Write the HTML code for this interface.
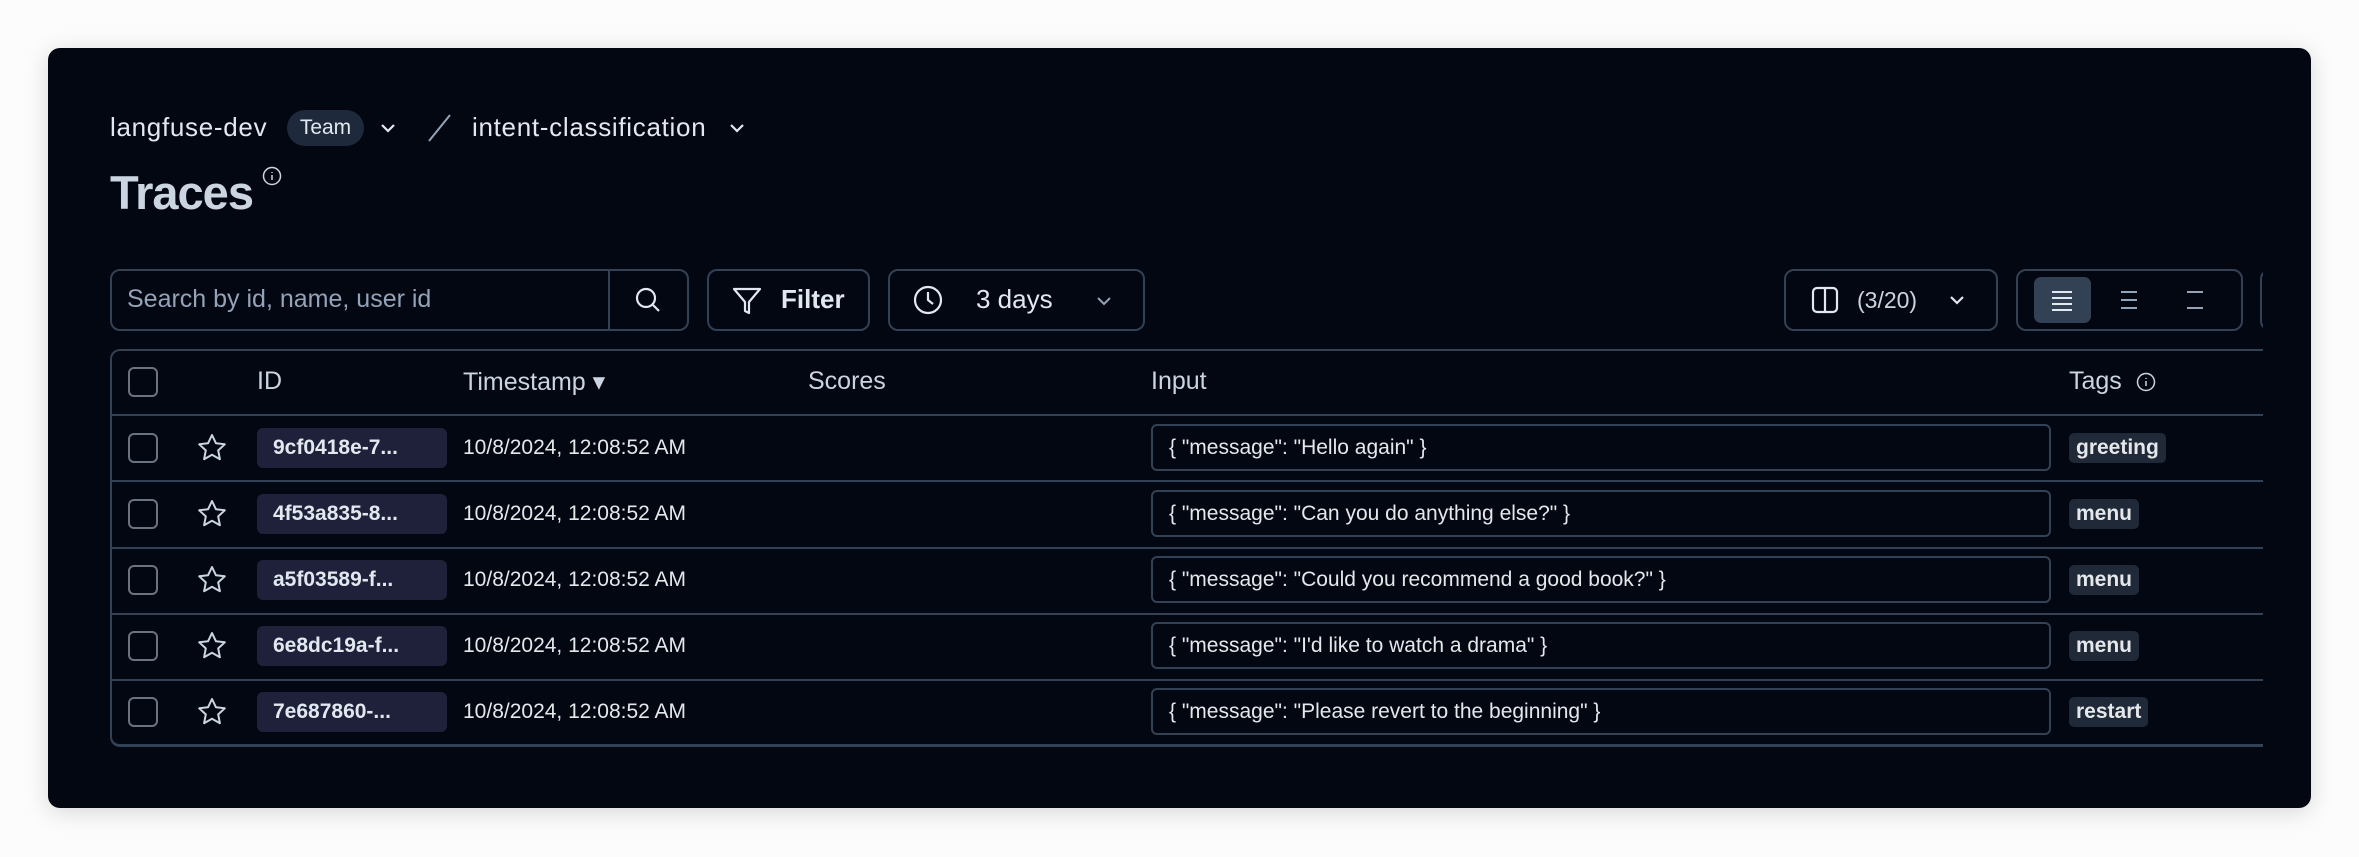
<!DOCTYPE html>
<html><head><meta charset="utf-8"><style>
*{box-sizing:border-box;margin:0;padding:0}
body{width:2359px;height:857px;background:#fcfcfc;font-family:"Liberation Sans",sans-serif;position:relative;overflow:hidden}
.card{position:absolute;left:48px;top:48px;width:2263px;height:760px;background:#030712;border-radius:12px;box-shadow:0 4px 24px rgba(0,0,0,.15);overflow:hidden}
.a{position:absolute}
.t{color:#e2e8f0;font-size:26px;white-space:nowrap;letter-spacing:0.7px}
.box{position:absolute;border:2px solid #334155;border-radius:10px}
.hd{color:#cbd5e1;font-size:25px;position:absolute;top:367px;white-space:nowrap}
.hl{position:absolute;left:110px;width:2153px;height:2px;background:#334155}
.cb{position:absolute;left:128px;width:30px;height:30px;border:2px solid #6b7280;border-radius:6px}
.id{position:absolute;left:257px;width:190px;height:40px;background:#1e2139;border-radius:6px;color:#e2e8f0;font-weight:bold;font-size:21px;line-height:40px;padding-left:16px}
.ts{position:absolute;left:463px;color:#e5e7eb;font-size:21px;line-height:40px}
.in{position:absolute;left:1151px;width:900px;height:47px;border:2px solid #334155;border-radius:6px;color:#e5e7eb;font-size:21px;line-height:43px;padding-left:16px}
.tag{position:absolute;left:2069px;height:30px;background:#1f2937;border-radius:5px;color:#e5e7eb;font-weight:bold;font-size:21px;line-height:30px;padding:0 7px}
svg{position:absolute}
</style></head><body>
<div class="card"></div>
<div class="a t" style="left:110px;top:112px">langfuse-dev</div>
<div class="a" style="left:287px;top:110px;width:77px;height:36px;background:#1e293b;border-radius:18px;color:#e2e8f0;font-size:21px;line-height:36px;text-align:center">Team</div>
<svg style="left:378px;top:118px" width="20" height="20" viewBox="0 0 20 20"><path d="M4 7l6 6 6-6" stroke="#e2e8f0" stroke-width="2.2" fill="none"/></svg>
<svg style="left:424px;top:112px" width="30" height="32"><path d="M26 3L5 29" stroke="#94a3b8" stroke-width="2"/></svg>
<div class="a t" style="left:472px;top:112px">intent-classification</div>
<svg style="left:727px;top:118px" width="20" height="20" viewBox="0 0 20 20"><path d="M4 7l6 6 6-6" stroke="#e2e8f0" stroke-width="2.2" fill="none"/></svg>
<div class="a" style="left:110px;top:165px;color:#cbd5e1;font-size:47px;font-weight:bold;letter-spacing:-1px">Traces</div>
<svg style="left:262px;top:166px" width="20" height="20"><circle cx="10" cy="10" r="8.5" stroke="#cbd5e1" stroke-width="1.5" fill="none"/><path d="M10 9v5M10 6v1" stroke="#cbd5e1" stroke-width="1.5"/></svg>

<div class="box" style="left:110px;top:269px;width:579px;height:62px"></div>
<div class="a" style="left:608px;top:270px;width:2px;height:60px;background:#334155"></div>
<div class="a" style="left:127px;top:285px;color:#94a3b8;font-size:25px">Search by id, name, user id</div>
<svg style="left:633px;top:285px" width="30" height="30"><circle cx="13" cy="13" r="9" stroke="#e2e8f0" stroke-width="2.2" fill="none"/><path d="M20 20l6 6" stroke="#e2e8f0" stroke-width="2.2"/></svg>
<div class="box" style="left:707px;top:269px;width:163px;height:62px"></div>
<svg style="left:731px;top:285px" width="32" height="32"><path d="M3 4h26L18 17v11l-4-2v-9z" stroke="#e2e8f0" stroke-width="2.2" fill="none" stroke-linejoin="round"/></svg>
<div class="a" style="left:781px;top:284px;color:#e2e8f0;font-size:26px;font-weight:bold">Filter</div>
<div class="box" style="left:888px;top:269px;width:257px;height:62px"></div>
<svg style="left:912px;top:284px" width="32" height="32"><circle cx="16" cy="16" r="13" stroke="#e2e8f0" stroke-width="2.2" fill="none"/><path d="M16 8v8l5 4" stroke="#e2e8f0" stroke-width="2.2" fill="none"/></svg>
<div class="a" style="left:976px;top:284px;color:#e2e8f0;font-size:26px">3 days</div>
<svg style="left:1094px;top:291px" width="20" height="20"><path d="M4 7l6 6 6-6" stroke="#94a3b8" stroke-width="2" fill="none"/></svg>

<div class="box" style="left:1784px;top:269px;width:214px;height:62px"></div>
<svg style="left:1811px;top:286px" width="28" height="28"><rect x="2" y="2" width="24" height="24" rx="4" stroke="#e2e8f0" stroke-width="2.2" fill="none"/><path d="M14 2v24" stroke="#e2e8f0" stroke-width="2.2"/></svg>
<div class="a" style="left:1857px;top:287px;color:#cbd5e1;font-size:23px">(3/20)</div>
<svg style="left:1947px;top:290px" width="20" height="20"><path d="M4 7l6 6 6-6" stroke="#e2e8f0" stroke-width="2.2" fill="none"/></svg>
<div class="box" style="left:2016px;top:269px;width:227px;height:62px"></div>
<div class="a" style="left:2034px;top:277px;width:57px;height:46px;background:#334155;border-radius:7px"></div>
<svg style="left:2050px;top:289px" width="24" height="22"><path d="M2 3h20M2 9h20M2 15h20M2 21h20" stroke="#e2e8f0" stroke-width="2"/></svg>
<svg style="left:2117px;top:289px" width="24" height="22"><path d="M4 3h16M4 11h16M4 19h16" stroke="#94a3b8" stroke-width="2"/></svg>
<svg style="left:2183px;top:289px" width="24" height="22"><path d="M4 3h16M4 19h16" stroke="#94a3b8" stroke-width="2"/></svg>
<div class="a" style="left:2260px;top:269px;width:3px;height:62px;overflow:hidden"><div style="width:30px;height:62px;border:2px solid #334155;border-radius:10px"></div></div>

<div class="a" style="left:110px;top:349px;width:2153px;height:398px;border:2px solid #334155;border-right:none;border-radius:10px 0 0 10px;border-bottom-width:3px"></div>
<div class="cb" style="top:367px"></div>
<div class="hd" style="left:257px">ID</div>
<div class="hd" style="left:463px">Timestamp ▾</div>
<div class="hd" style="left:808px">Scores</div>
<div class="hd" style="left:1151px">Input</div>
<div class="hd" style="left:2069px">Tags</div>
<svg style="left:2136px;top:372px" width="20" height="20"><circle cx="10" cy="10" r="8.5" stroke="#cbd5e1" stroke-width="1.5" fill="none"/><path d="M10 9v5M10 6v1" stroke="#cbd5e1" stroke-width="1.5"/></svg>
<div class="hl" style="top:414px"></div>
<div class="hl" style="top:480px"></div>
<div class="hl" style="top:547px"></div>
<div class="hl" style="top:613px"></div>
<div class="hl" style="top:679px"></div>

<div class="cb" style="top:433px"></div><svg style="left:196px;top:432px" width="32" height="32"><path d="M16 3l3.9 8.2 8.9 1.1-6.6 6.1 1.7 8.8L16 22.8l-7.9 4.4 1.7-8.8-6.6-6.1 8.9-1.1z" stroke="#cbd5e1" stroke-width="2" fill="none" stroke-linejoin="round"/></svg>
<div class="id" style="top:428px">9cf0418e-7...</div><div class="ts" style="top:428px">10/8/2024, 12:08:52 AM</div>
<div class="in" style="top:424px">{ "message": "Hello again" }</div><div class="tag" style="top:433px">greeting</div>

<div class="cb" style="top:499px"></div><svg style="left:196px;top:498px" width="32" height="32"><path d="M16 3l3.9 8.2 8.9 1.1-6.6 6.1 1.7 8.8L16 22.8l-7.9 4.4 1.7-8.8-6.6-6.1 8.9-1.1z" stroke="#cbd5e1" stroke-width="2" fill="none" stroke-linejoin="round"/></svg>
<div class="id" style="top:494px">4f53a835-8...</div><div class="ts" style="top:494px">10/8/2024, 12:08:52 AM</div>
<div class="in" style="top:490px">{ "message": "Can you do anything else?" }</div><div class="tag" style="top:499px">menu</div>

<div class="cb" style="top:565px"></div><svg style="left:196px;top:564px" width="32" height="32"><path d="M16 3l3.9 8.2 8.9 1.1-6.6 6.1 1.7 8.8L16 22.8l-7.9 4.4 1.7-8.8-6.6-6.1 8.9-1.1z" stroke="#cbd5e1" stroke-width="2" fill="none" stroke-linejoin="round"/></svg>
<div class="id" style="top:560px">a5f03589-f...</div><div class="ts" style="top:560px">10/8/2024, 12:08:52 AM</div>
<div class="in" style="top:556px">{ "message": "Could you recommend a good book?" }</div><div class="tag" style="top:565px">menu</div>

<div class="cb" style="top:631px"></div><svg style="left:196px;top:630px" width="32" height="32"><path d="M16 3l3.9 8.2 8.9 1.1-6.6 6.1 1.7 8.8L16 22.8l-7.9 4.4 1.7-8.8-6.6-6.1 8.9-1.1z" stroke="#cbd5e1" stroke-width="2" fill="none" stroke-linejoin="round"/></svg>
<div class="id" style="top:626px">6e8dc19a-f...</div><div class="ts" style="top:626px">10/8/2024, 12:08:52 AM</div>
<div class="in" style="top:622px">{ "message": "I'd like to watch a drama" }</div><div class="tag" style="top:631px">menu</div>

<div class="cb" style="top:697px"></div><svg style="left:196px;top:696px" width="32" height="32"><path d="M16 3l3.9 8.2 8.9 1.1-6.6 6.1 1.7 8.8L16 22.8l-7.9 4.4 1.7-8.8-6.6-6.1 8.9-1.1z" stroke="#cbd5e1" stroke-width="2" fill="none" stroke-linejoin="round"/></svg>
<div class="id" style="top:692px">7e687860-...</div><div class="ts" style="top:692px">10/8/2024, 12:08:52 AM</div>
<div class="in" style="top:688px">{ "message": "Please revert to the beginning" }</div><div class="tag" style="top:697px">restart</div>
</body></html>
